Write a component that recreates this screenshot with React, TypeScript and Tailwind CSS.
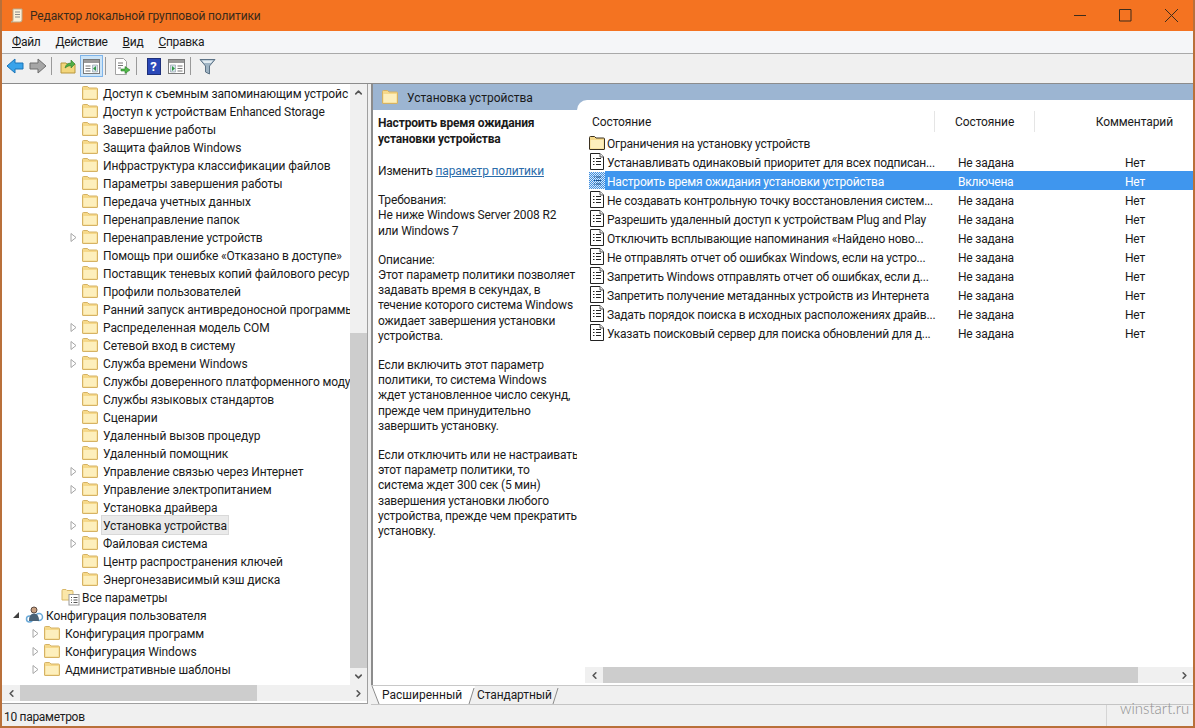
import { ChevronLeft, ChevronRight, ChevronUp, ChevronDown } from "lucide-react";

const FONT = "font-['Roboto',sans-serif]";

interface TreeRow {
  label: string;
  indent: number;
  arrow?: boolean;
  selected?: boolean;
  icon?: "folder" | "all" | "user";
}

const treeRows: TreeRow[] = [
  { label: "Доступ к съемным запоминающим устройс", indent: 80 },
  { label: "Доступ к устройствам Enhanced Storage", indent: 80 },
  { label: "Завершение работы", indent: 80 },
  { label: "Защита файлов Windows", indent: 80 },
  { label: "Инфраструктура классификации файлов", indent: 80 },
  { label: "Параметры завершения работы", indent: 80 },
  { label: "Передача учетных данных", indent: 80 },
  { label: "Перенаправление папок", indent: 80 },
  { label: "Перенаправление устройств", indent: 80, arrow: true },
  { label: "Помощь при ошибке «Отказано в доступе»", indent: 80 },
  { label: "Поставщик теневых копий файлового ресур", indent: 80 },
  { label: "Профили пользователей", indent: 80 },
  { label: "Ранний запуск антивредоносной программы", indent: 80 },
  { label: "Распределенная модель COM", indent: 80, arrow: true },
  { label: "Сетевой вход в систему", indent: 80, arrow: true },
  { label: "Служба времени Windows", indent: 80, arrow: true },
  { label: "Службы доверенного платформенного моду", indent: 80 },
  { label: "Службы языковых стандартов", indent: 80 },
  { label: "Сценарии", indent: 80 },
  { label: "Удаленный вызов процедур", indent: 80 },
  { label: "Удаленный помощник", indent: 80 },
  { label: "Управление связью через Интернет", indent: 80, arrow: true },
  { label: "Управление электропитанием", indent: 80, arrow: true },
  { label: "Установка драйвера", indent: 80 },
  { label: "Установка устройства", indent: 80, arrow: true, selected: true },
  { label: "Файловая система", indent: 80, arrow: true },
  { label: "Центр распространения ключей", indent: 80 },
  { label: "Энергонезависимый кэш диска", indent: 80 },
  { label: "Все параметры", indent: 59, icon: "all" },
  { label: "Конфигурация пользователя", indent: 23, icon: "user" },
  { label: "Конфигурация программ", indent: 42, arrow: true },
  { label: "Конфигурация Windows", indent: 42, arrow: true },
  { label: "Административные шаблоны", indent: 42, arrow: true },
];

const policies = [
  { name: "Устанавливать одинаковый приоритет для всех подписан...", state: "Не задана" },
  { name: "Настроить время ожидания установки устройства", state: "Включена", selected: true },
  { name: "Не создавать контрольную точку восстановления систем...", state: "Не задана" },
  { name: "Разрешить удаленный доступ к устройствам Plug and Play", state: "Не задана" },
  { name: "Отключить всплывающие напоминания «Найдено ново...", state: "Не задана" },
  { name: "Не отправлять отчет об ошибках Windows, если на устро...", state: "Не задана" },
  { name: "Запретить Windows отправлять отчет об ошибках, если д...", state: "Не задана" },
  { name: "Запретить получение метаданных устройств из Интернета", state: "Не задана" },
  { name: "Задать порядок поиска в исходных расположениях драйв...", state: "Не задана" },
  { name: "Указать поисковый сервер для поиска обновлений для д...", state: "Не задана" },
];

function Folder({ dark, className = "" }: { dark?: boolean; className?: string }) {
  return (
    <svg width="16" height="14" viewBox="0 0 16 14" className={className}>
      <path d="M.5 13V1.500q0-1 1-1h4l1.500 1.500h7.500q1 0 1 1V13q0 .5-.5.5H1q-.5 0-.5-.5z" fill="#f6d98a" stroke={dark ? "#3a3020" : "#d5b264"} />
      <path d="M1.500 4h13v8.500h-13z" fill="#fdefbd" />
    </svg>
  );
}

function AllSettingsIcon() {
  return (
    <svg width="20" height="18" viewBox="0 0 20 18">
      <path d="M1 12V2.500q0-1 1-1h3l1 1h5q1 0 1 1V12z" fill="#fbe7a8" stroke="#d9b869" />
      <rect x="8" y="6.500" width="10" height="10.500" fill="#fff" stroke="#9a9a9a" />
      <path d="M10 9.500h1M12.500 9.500h4M10 12h1M12.500 12h4M10 14.500h1M12.500 14.500h4" stroke="#555" />
    </svg>
  );
}

function UserIcon() {
  return (
    <svg width="20" height="18" viewBox="0 0 20 18">
      <circle cx="14" cy="11" r="3.500" fill="none" stroke="#6aa9d8" strokeWidth="1.500" />
      <circle cx="4.500" cy="13" r="3" fill="none" stroke="#6aa9d8" strokeWidth="1.500" />
      <circle cx="9" cy="4" r="3" fill="#c9a182" stroke="#5b4a40" />
      <path d="M4 15q0-7.500 5-7.500t5 7.500z" fill="#4a6276" />
    </svg>
  );
}

function PolicyIcon({ selected }: { selected?: boolean }) {
  if (selected) {
    return (
      <svg width="16" height="17" viewBox="0 0 16 17">
        <defs>
          <pattern id="dither" width="2" height="2" patternUnits="userSpaceOnUse">
            <rect width="2" height="2" fill="#dbe9f7" />
            <rect width="1" height="1" fill="#3f8fe0" />
            <rect x="1" y="1" width="1" height="1" fill="#3f8fe0" />
          </pattern>
        </defs>
        <rect x="0" y="0" width="16" height="17" fill="url(#dither)" />
        <path d="M5 5h1M7 5h5M5 8.500h1M7 8.500h5M5 12h1M7 12h5" stroke="#1d4f86" />
      </svg>
    );
  }
  return (
    <svg width="16" height="17" viewBox="0 0 16 17">
      <path d="M1.500 .5h9.500l3.500 3.500v12.500h-13z" fill="#fff" stroke="#222" />
      <path d="M11 .5v3.500h3.500" fill="#eee" stroke="#555" />
      <path d="M4 5.500h1.500M7 5.500h5M4 8.500h1.500M7 8.500h5M4 11.500h1.500M7 11.500h5" stroke="#222" strokeWidth="1.200" />
    </svg>
  );
}

function Arrow({ side }: { side: "left" | "right" }) {
  const colors = side === "left" ? ["#39a3ea", "#1a74b8"] : ["#a6a6a6", "#6f6f6f"];
  const d = side === "left" ? "M1 9l8-7v4h8v6H9v4z" : "M17 9L9 2v4H1v6h8v4z";
  return (
    <svg width="18" height="18" viewBox="0 0 18 18">
      <path d={d} fill={colors[0]} stroke={colors[1]} />
    </svg>
  );
}

function Sep() {
  return <div className="mt-[2px] mr-[5px] ml-[2px] h-[18px] w-px bg-[#9a9a9a]" />;
}

function ToolButton({ children, active }: { children: React.ReactNode; active?: boolean }) {
  return (
    <div className={`flex h-[22px] w-[23px] items-center justify-center border ${active ? "border-[#7eb4ea] bg-[#cce4f7]" : "border-transparent"}`}>
      {children}
    </div>
  );
}

function PaneIcon({ right }: { right?: boolean }) {
  return (
    <svg width="17" height="15" viewBox="0 0 17 15">
      <rect x=".5" y=".5" width="16" height="14" fill="#fff" stroke="#7a7a7a" />
      <rect x="1" y="1" width="15" height="3" fill="#9a9a9a" />
      <path d={right ? "M2.500 6h5v7h-5z" : "M9.500 6h5v7h-5z"} fill="#d8e2ea" stroke="#8a9aa6" strokeWidth=".6" />
      <path d={right ? "M9.500 7h5M9.500 9.500h5M9.500 12h5" : "M2.500 7h5M2.500 9.500h5M2.500 12h5"} stroke="#777" />
      <path d={right ? "M4 7l3 2.500L4 12z" : "M13 7l-3 2.500 3 2.500z"} fill="#2f9a45" />
    </svg>
  );
}

function Toolbar() {
  return (
    <div className="flex h-[29px] shrink-0 items-start bg-[#f0f0f0] pt-[1px] pl-[1px]">
      <ToolButton><Arrow side="left" /></ToolButton>
      <ToolButton><Arrow side="right" /></ToolButton>
      <Sep />
      <ToolButton>
        <svg width="17" height="16" viewBox="0 0 17 16">
          <path d="M1 15V5h5l1 1h8v9z" fill="#f3d67c" stroke="#b8973f" />
          <path d="M5 10q1-5 6-5V2l4 4-4 4V7.500q-3 0-6 2.500z" fill="#4fae47" stroke="#2f7d2b" strokeWidth=".6" />
        </svg>
      </ToolButton>
      <ToolButton active><PaneIcon /></ToolButton>
      <Sep />
      <ToolButton>
        <svg width="17" height="17" viewBox="0 0 17 17">
          <path d="M1.500 .5h8l3 3v13h-11z" fill="#fff" stroke="#a2a2a2" />
          <path d="M4 5h5M4 7.500h5M4 10h3" stroke="#777" />
          <path d="M7 11h4V8.500l5 3.500-5 3.500V13H7z" fill="#4fb848" stroke="#2f7d2b" strokeWidth=".6" />
        </svg>
      </ToolButton>
      <Sep />
      <ToolButton>
        <div className="flex h-[17px] w-[14px] items-center justify-center border border-[#1d2f7a] bg-[#2a48b8] text-[13px] leading-none font-bold text-white">?</div>
      </ToolButton>
      <ToolButton><PaneIcon right /></ToolButton>
      <Sep />
      <ToolButton>
        <svg width="17" height="17" viewBox="0 0 17 17">
          <path d="M1 1.500h15L10.500 8v8l-4-2V8z" fill="#9fb4c4" stroke="#5d7386" />
          <path d="M3 2.500h11L12 5H5z" fill="#e2ebf1" />
        </svg>
      </ToolButton>
    </div>
  );
}

function TreeView() {
  return (
    <div className="mb-[1px] flex w-[366px] shrink-0 flex-col border-r border-b border-[#a0a0a0] bg-white pb-[2px]">
      <div className="flex min-h-0 flex-1">
        <div className="min-w-0 flex-1 overflow-hidden">
          {treeRows.map((row) => (
            <div key={row.label} className="relative flex h-[18px] items-center whitespace-nowrap" style={{ paddingLeft: row.indent }}>
              {row.arrow && (
                <svg width="7" height="9" viewBox="0 0 7 9" className="absolute top-[5px]" style={{ left: row.indent - 12 }}>
                  <path d="M1 .5l5 4-5 4z" fill="#fff" stroke="#a6a6a6" />
                </svg>
              )}
              {row.icon === "user" && (
                <svg width="8" height="8" viewBox="0 0 8 8" className="absolute left-[10px] top-[5px]">
                  <path d="M7 1v6H1z" fill="#404040" />
                </svg>
              )}
              <span className="flex w-[21px] shrink-0 items-center">
                {row.icon === "all" ? <AllSettingsIcon /> : row.icon === "user" ? <UserIcon /> : <Folder />}
              </span>
              <span className={`-ml-[1px] px-[1px] pt-[2px] text-[12px] leading-[16px] tracking-[-0.1px] text-[#1a1a1a] ${row.selected ? "bg-[#eaeaea] outline outline-[#d9d9d9]" : ""}`}>
                {row.label}
              </span>
            </div>
          ))}
        </div>
        <div className="flex w-[17px] shrink-0 flex-col bg-[#f0f0f0]">
          <div className="flex h-[17px] items-center justify-center"><ChevronUp size={11} strokeWidth={3.5} className="text-[#555]" /></div>
          <div className="h-[232px]" />
          <div className="flex-1 bg-[#cdcdcd]" />
          <div className="flex h-[17px] items-center justify-center"><ChevronDown size={11} strokeWidth={3.5} className="text-[#555]" /></div>
        </div>
      </div>
      <HScroll leftGap={0} thumb={238} rest={92} />
    </div>
  );
}

function HScroll({ thumb, rest, leftGap }: { thumb: number; rest: number; leftGap: number }) {
  return (
    <div className="flex h-[16px] shrink-0 bg-[#f0f0f0]" style={{ marginLeft: leftGap }}>
      <div className="flex w-[18px] shrink-0 items-center justify-center"><ChevronLeft size={11} strokeWidth={3.5} className="text-[#555]" /></div>
      <div className="bg-[#cdcdcd]" style={{ width: thumb }} />
      <div className="flex-1" style={{ minWidth: rest }} />
      <div className="flex w-[18px] shrink-0 items-center justify-center"><ChevronRight size={11} strokeWidth={3.5} className="text-[#555]" /></div>
    </div>
  );
}

function Description() {
  return (
    <div className="w-[204px] shrink-0 px-[5px] pt-[5px] text-[12px] leading-[15.2px] tracking-[-0.16px] whitespace-nowrap text-[#1a1a1a]">
      <p className="leading-[16px] font-bold">Настроить время ожидания<br />установки устройства</p>
      <p className="mt-[17px]">Изменить <span className="text-[#2a6cab] underline">параметр политики</span></p>
      <p className="mt-[14px]">Требования:<br />Не ниже Windows Server 2008 R2<br />или Windows 7</p>
      <p className="mt-[14px]">Описание:<br />Этот параметр политики позволяет<br />задавать время в секундах, в<br />течение которого система Windows<br />ожидает завершения установки<br />устройства.</p>
      <p className="mt-[14px]">Если включить этот параметр<br />политики, то система Windows<br />ждет установленное число секунд,<br />прежде чем принудительно<br />завершить установку.</p>
      <p className="mt-[14px]">Если отключить или не настраивать<br />этот параметр политики, то<br />система ждет 300 сек (5 мин)<br />завершения установки любого<br />устройства, прежде чем прекратить<br />установку.</p>
    </div>
  );
}

function PolicyList() {
  return (
    <div className="-mt-[10px] flex min-w-0 flex-1 flex-col rounded-tl-[10px] bg-white pb-[2px]">
      <div className="flex h-[33px] shrink-0 items-end pb-[1px] text-[12px] tracking-[-0.1px] text-[#1a1a1a]">
        <div className="ml-[15px] h-[21px] w-[343px] border-r border-[#e5e5e5] leading-[23px]">Состояние</div>
        <div className="h-[21px] w-[100px] border-r border-[#e5e5e5] pl-[20px] leading-[23px]">Состояние</div>
        <div className="h-[21px] flex-1 pr-[20px] text-right leading-[23px]">Комментарий</div>
      </div>
      <div className="flex-1 pl-[12px] text-[12px] tracking-[-0.2px] text-[#1a1a1a]">
        <div className="flex h-[19px] items-center">
          <Folder dark className="shrink-0" />
          <span className="ml-[2px] pt-[2px]">Ограничения на установку устройств</span>
        </div>
        {policies.map((p) => (
          <div key={p.name} className="flex h-[19px] items-center">
            <span className="flex w-[16px] shrink-0 items-center"><PolicyIcon selected={p.selected} /></span>
            <div className={`flex h-[19px] flex-1 items-center pt-[2px] ${p.selected ? "bg-[#3f96ee] text-white" : ""}`}>
              <span className="w-[353px] shrink-0 pl-[2px] whitespace-nowrap">{p.name}</span>
              <span className="w-[167px] shrink-0">{p.state}</span>
              <span>Нет</span>
            </div>
          </div>
        ))}
      </div>
      <HScroll leftGap={8} thumb={535} rest={16} />
    </div>
  );
}

function Tabs() {
  return (
    <div className="flex h-[19px] shrink-0 items-start border-b border-[#c4c4c4] text-[12px] leading-[19px] text-[#1a1a1a]">
      <div className="flex h-[18px] items-stretch">
        <svg width="10" height="18" viewBox="0 0 10 18"><path d="M0 0l8 18h2V0z" fill="#fff" /><path d="M1 0l7 18" stroke="#8a8a8a" fill="none" /></svg>
        <div className="w-[86px] bg-white pl-[1px]">Расширенный</div>
        <svg width="8" height="18" viewBox="0 0 8 18"><path d="M0 0h8L2 18H0z" fill="#fff" /><path d="M7 2L2 18" stroke="#8a8a8a" fill="none" /></svg>
      </div>
      <div className="-ml-[1px] flex h-[18px] items-stretch">
        <div className="w-[77px] pl-[3px] tracking-[-0.1px]">Стандартный</div>
        <svg width="8" height="18" viewBox="0 0 8 18"><path d="M7 2L2 18" stroke="#8a8a8a" fill="none" /></svg>
      </div>
    </div>
  );
}

export default function App() {
  return (
    <div className={`${FONT} flex h-[728px] w-[1195px] flex-col overflow-hidden border-x-2 border-b-2 border-x-[#b9703a] border-b-[#b9703a] bg-[#f0f0f0]`}>
      <div className="flex h-[31px] shrink-0 items-center bg-[#f47321] text-[12px] text-[#3a2a1a]">
        <svg width="16" height="16" viewBox="0 0 16 16" className="ml-[7px]">
          <path d="M4 1h9v11q0 2-2 2H2q2 0 2-2z" fill="#fbf0d8" stroke="#b9a98a" />
          <path d="M6 4h5M6 6.500h5M6 9h5" stroke="#8a8a8a" />
        </svg>
        <span className="ml-[5px] tracking-[-0.13px]">Редактор локальной групповой политики</span>
        <div className="flex-1" />
        <svg width="110" height="16" viewBox="0 0 110 16" className="mr-[9px]" fill="none" stroke="#3d2c1c">
          <path d="M0 7.500h12M45.500 1.500h11.500v11.500H45.500zM91 1l13 13M104 1L91 14" />
        </svg>
      </div>
      <div className="flex h-[22px] shrink-0 items-center gap-[15px] bg-[#f5f6f8] pl-[10px] text-[12px] tracking-[-0.3px] text-[#1a1a1a]">
        <span><u>Ф</u>айл</span>
        <span><u>Д</u>ействие</span>
        <span><u>В</u>ид</span>
        <span><u>С</u>правка</span>
      </div>
      <div className="h-px shrink-0 bg-[#a9a9a9]" />
      <Toolbar />
      <div className="flex min-h-0 flex-1 border-t border-[#8c8c8c]">
        <TreeView />
        <div className="w-[3px] shrink-0" />
        <div className="flex min-w-0 flex-1 flex-col">
          <div className="flex min-h-0 flex-1 flex-col border-l-2 border-[#8c8c8c] bg-white">
            <div className="flex h-[26px] shrink-0 items-center bg-[#9cb5d2] pl-[9px] text-[12px] text-[#1a1a1a]">
              <Folder />
              <span className="ml-[9px] pt-[2px]">Установка устройства</span>
            </div>
            <div className="flex min-h-0 flex-1">
              <Description />
              <PolicyList />
            </div>
          </div>
          <div className="h-px shrink-0 bg-[#c8c8c8]" />
          <Tabs />
        </div>
      </div>
      <div className="flex h-[21px] shrink-0 items-center pt-[3px] pl-[2px] text-[12px] tracking-[-0.3px] text-[#1a1a1a]">
        10 параметров
        <div className="-mt-[3px] ml-auto h-[21px] w-[87px] border-l border-[#d5d5d5] pl-[13px] font-['Lato',sans-serif] text-[15px] leading-[7px] tracking-normal font-light text-[#8f8f8f]">winstart.ru</div>
      </div>
    </div>
  );
}
